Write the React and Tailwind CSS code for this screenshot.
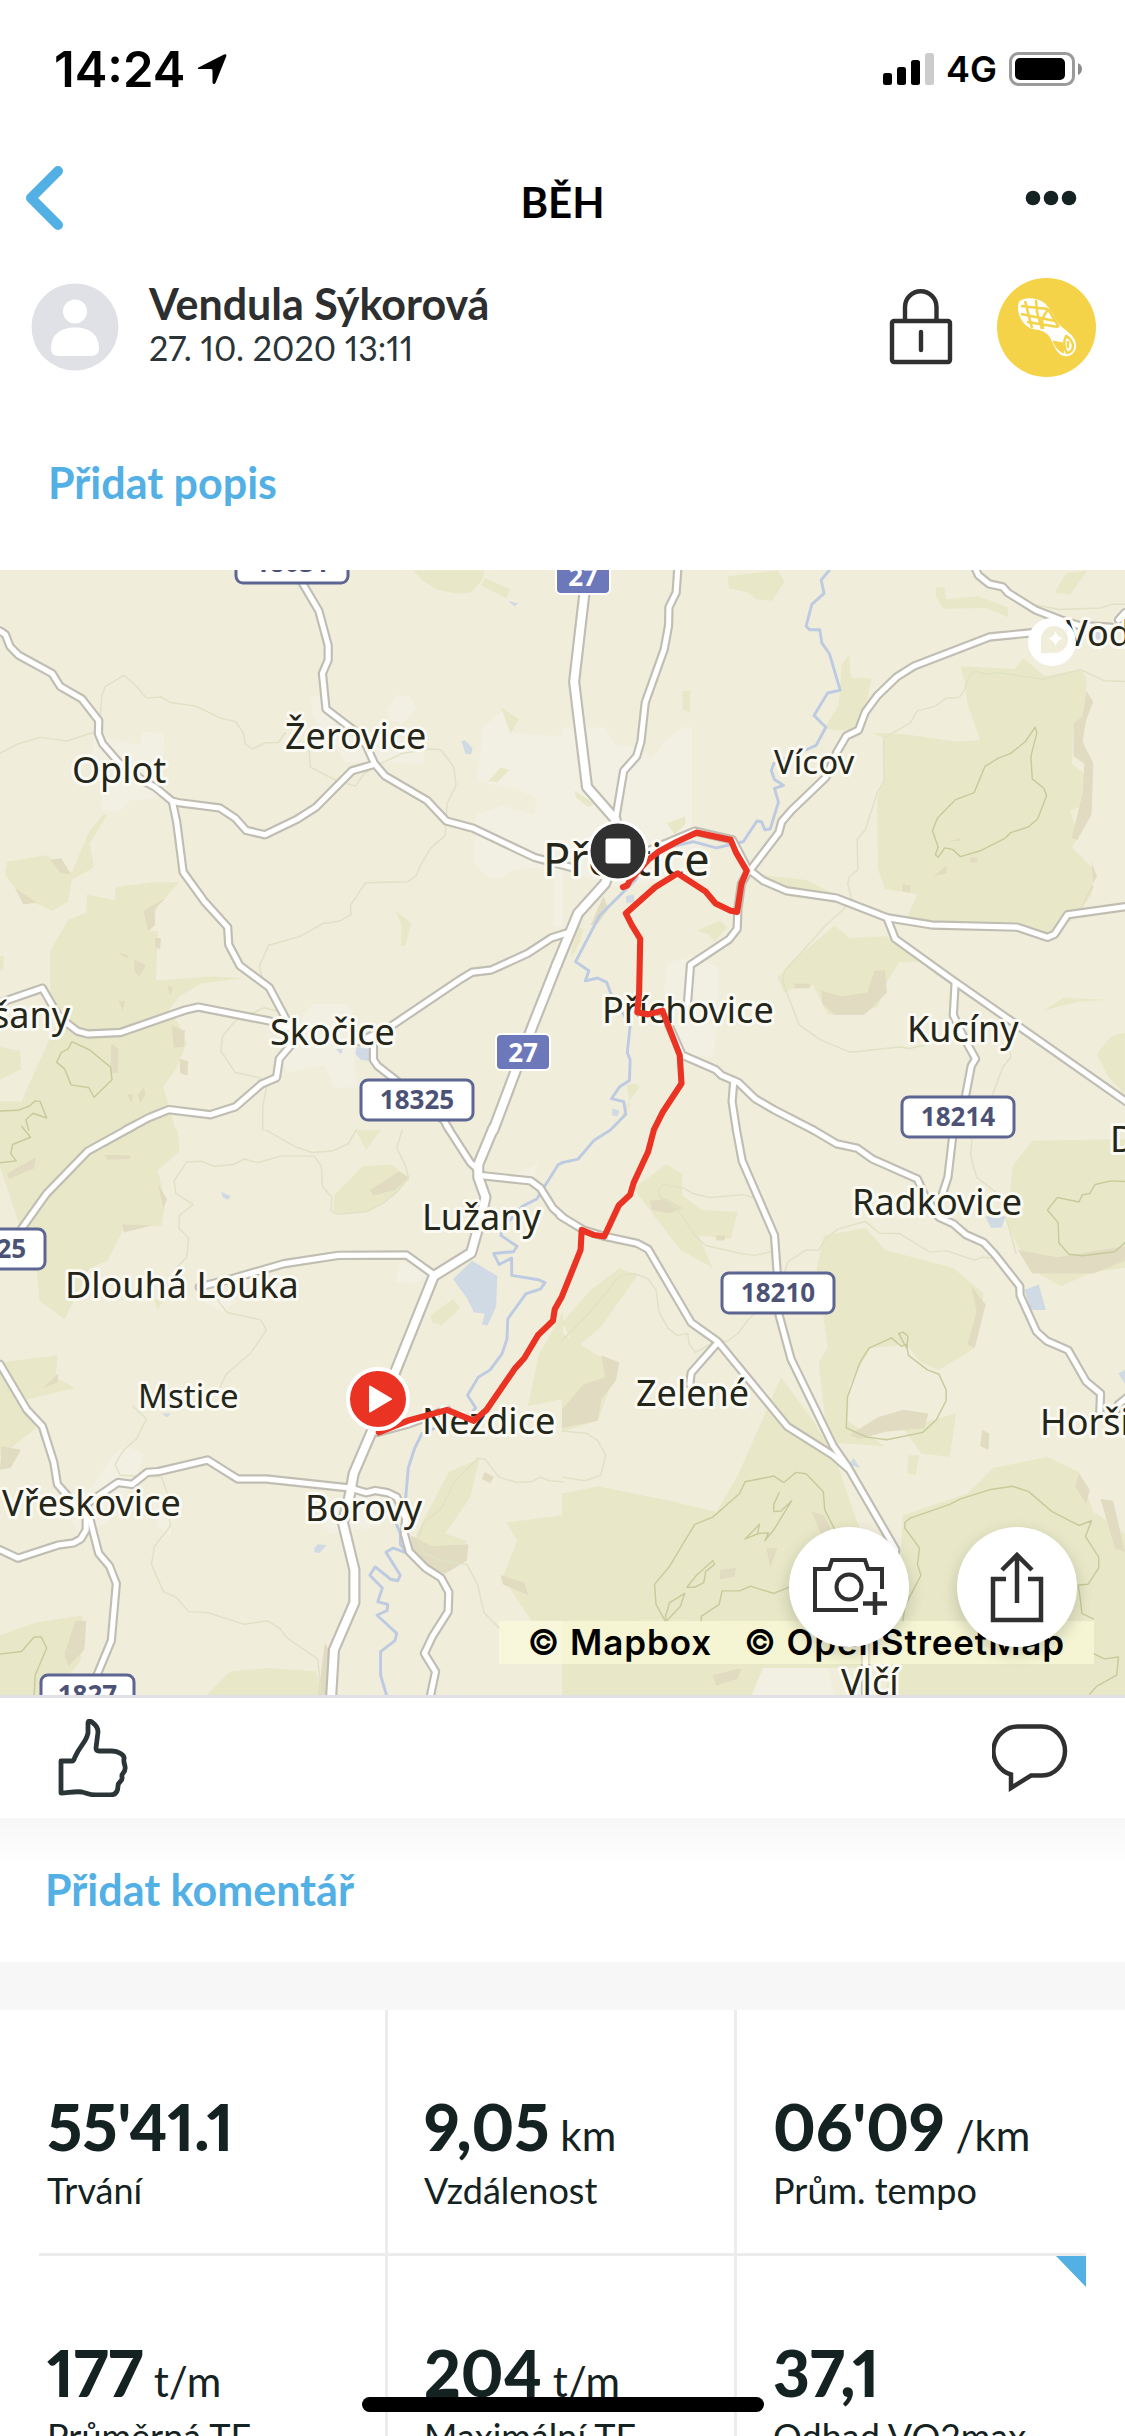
import React from 'react';

// Map geometry is split in four tiles, each with its own origin
const TILES = [
    {
        id: 'nw',
        x: 0,
        y: 0,
        built: [
            '398,472 458,478 452,600 470,650 360,662 330,692 282,685 285,640 256,540 262,480 390,510',
            '866,372 905,380 985,470 1180,500 1180,560 960,556 940,520 900,500 870,420',
            '1078,410 1105,372 1140,375 1160,410 1120,450 1085,440',
            '1345,460 1400,415 1430,476 1568,485 1568,845 1430,850 1400,875 1355,870 1318,830 1325,700 1400,676 1490,700 1492,655 1440,630 1328,610',
            '870,1222 970,1222 1000,1300 985,1400 1000,1450 930,1452 905,1390 800,1410 780,1370 820,1290',
            '1545,850 1568,850 1568,1010 1540,1005',
        ],
        forest: [
            '1150,28 1350,28 1340,60 1310,90 1270,92 1220,82 1180,60',
            '1350,50 1420,80 1410,105 1340,70',
            '20,830 130,812 200,860 225,800 250,745 290,698 298,702 250,780 262,845 200,880 190,940 145,965 90,940 45,905 14,865',
            '322,900 430,886 500,886 440,950 420,1020 440,1020 434,1156 590,1146 680,1150 560,1165 500,1200 470,1240 500,1280 520,1330 490,1400 455,1450 470,1500 490,1570 0,1570 0,1490 60,1490 100,1400 170,1250 140,1200 140,1075 190,990 240,970 242,920 320,936',
            '1395,405 1445,438 1422,478',
            '1360,608 1395,570 1418,578 1385,612',
            '1102,965 1146,1000 1128,1064 1116,1060 1118,1005',
            '0,1340 55,1350 60,1400 0,1430',
            '0,1090 10,1090 10,1125 0,1130',
        ],
        slope: [
            '140,825 170,820 198,866 168,860',
            '42,902 102,942 65,948',
            '400,965 465,928 430,960 432,1005 412,1020',
            '374,1098 406,1115 388,1145 374,1132',
            '432,1040 448,1040 446,1070 432,1065',
            '330,1080 355,1088 355,1098',
            '478,1280 515,1295 512,1340 484,1342',
            '310,1330 330,1345 328,1412 308,1410',
            '400,1452 406,1470 390,1495 384,1470',
            '330,1212 348,1214 342,1240',
            '355,1470 370,1470 365,1495',
            '466,1172 482,1174 474,1198',
            '500,1372 524,1378 522,1418 502,1412',
        ],
        water: ['1285,498 1295,496 1316,518 1312,535 1296,532', '1415,113 1445,120 1432,127', '992,1340 1028,1345 1028,1378 1005,1375 990,1360', '935,1345 955,1345 950,1360'],
        borders: [
            '0,532 50,506 112,488 186,498 262,474 278,440 284,372 293,348 346,317 380,348 408,380 450,377 475,392 545,402 615,435 657,445 680,480 682,505 702,520 740,503 775,502 795,475',
            '860,500 864,570 940,608 990,622 1012,590 1060,560 1120,532 1200,520 1228,522 1264,570 1270,620 1245,670 1240,758 1200,792 1170,842 1160,868 1136,885 1018,888 976,950 978,975 944,994 900,1000 834,1036 748,1060 722,1118 735,1165',
            '770,1240 735,1232 655,1268 620,1310 615,1350 655,1410 725,1425 742,1455 732,1500 732,1568',
        ],
        contours: [
            '200,1325 250,1348 308,1395 312,1430 262,1478 248,1452 198,1444 180,1400 158,1382 170,1355 190,1345 200,1325',
            '0,1516 50,1514 82,1502 98,1488 112,1490 130,1535 92,1522 72,1540 80,1568',
        ],
        roads: [
            '840,60 888,140 914,235 914,275 898,312 908,410 990,472 1020,510 1043,560 1072,594 1190,662 1243,718 1318,738 1488,818 1600,848',
            '0,195 15,205 28,238 52,262 145,312 168,348 228,382 275,442 274,478 286,506 330,556 400,608 432,625 480,664 500,668 612,682 655,710 686,744 738,756 826,714 880,680 980,580 1043,562',
            '480,664 492,720 510,858 570,940 634,1010 637,1058 668,1116 750,1176 795,1260 812,1290 810,1335 778,1372 770,1424 728,1442 656,1504 586,1526 470,1512 415,1534 350,1568',
            '0,1218 118,1178 165,1258 215,1296 245,1304 335,1300 516,1238 552,1230 750,1268 812,1290',
            '1000,1325 1085,1285 1280,1155 1315,1134 1368,1128 1470,1082 1535,1040 1585,1024',
            '1040,1310 1040,1375 1052,1392 1095,1425 1235,1540 1252,1568',
        ],
        highways: ['1552,1110 1480,1290 1374,1568'],
        rivers: [],
        route: '',
    },
    {
        id: 'ne',
        x: 1565,
        y: 0,
        built: [
            '0,460 120,460 150,510 210,515 250,545 285,500 340,458 362,460 362,730 420,860 300,880 150,900 0,850',
            '292,1110 360,1090 435,1120 440,1250 420,1370 340,1360 290,1260 285,1180',
        ],
        forest: [
            '462,45 600,28 620,60 585,112 540,108 520,90 465,78',
            '1042,75 1065,75 1070,108 1160,100 1240,130 1245,158 1180,132 1062,134 1042,100',
            '778,290 800,260 805,325 862,325 842,430 800,470 730,465 770,400 775,358',
            '335,362 358,358 356,418 336,412',
            '865,475 960,480 1100,500 1165,495 1130,400 1120,330 1110,292 1260,300 1285,270 1345,320 1445,300 1462,330 1450,430 1425,450 1420,560 1458,590 1440,680 1415,690 1440,760 1420,790 1480,850 1475,920 1430,985 1350,1040 1270,1010 1030,1004 960,985 990,920 900,905 880,850 878,650 898,610 895,490',
            '620,1190 600,1150 670,1080 760,1005 800,1040 900,1035 930,1045 1000,1105 940,1105 900,1170 880,1230 800,1250 740,1250 700,1170 640,1180',
            '292,725 343,705 345,725 315,755',
            '376,1020 440,992 460,1010 425,1050 410,1030',
            '25,1080 45,1010 60,1015 50,1050 28,1092',
            '35,635 90,670 75,680 40,655',
            '1345,1238 1395,1205 1520,1210 1440,1215',
            '1568,1300 1530,1310 1490,1360 1520,1420 1568,1470',
            '1372,90 1405,35 1465,28 1415,95',
            '545,865 680,880 750,915 620,905 570,880',
            '180,1445 205,1440 215,1450 180,1500 150,1560 190,1500',
        ],
        slope: [
            '1460,360 1480,390 1460,440 1450,500 1480,560 1475,700 1435,770 1420,765 1450,640 1455,560 1425,540 1425,450 1450,430',
            '1475,830 1490,870 1430,985 1480,900',
            '722,1185 780,1200 850,1190 870,1130 900,1128 905,1190 860,1235 840,1252 760,1252 725,1220',
            '645,1165 692,1166 690,1178 650,1178',
            '1035,870 1070,842 1072,862',
            '1078,775 1108,765 1108,772',
            '948,892 970,895 970,915 948,910',
            '1140,818 1158,820 1155,832 1135,832',
            '80,1005 115,925 130,960 100,1000',
        ],
        water: ['1480,190 1502,188 1505,220 1488,218', '178,925 200,920 202,940 180,945', '140,1508 160,1515 155,1530 140,1528'],
        borders: [
            '1568,122 1530,122 1500,132 1385,136 1300,120 1240,90',
            '1568,334 1510,332 1445,302 1340,328 1215,310 1185,314 1152,306 1135,318 1120,360 1105,378 1070,380 1040,402 990,415 970,448 896,490 897,610 878,640 845,742 822,768 824,852 800,872 796,890 806,930 785,960 735,1005 620,1130 615,1160 660,1278 720,1320 802,1354 940,1340 968,1344 1010,1335',
            '1245,1330 1250,1368 1228,1395 1198,1475',
        ],
        contours: ['1318,460 1290,500 1250,532 1215,545 1178,568 1148,640 1095,660 1046,710 1032,745 1048,790 1040,810 1048,818 1066,792 1088,796 1110,816 1165,800 1235,765 1250,750 1300,734 1325,712 1350,648 1342,628 1310,602 1306,540 1323,475 1318,460'],
        roads: [
            '323,20 318,90 298,130 297,180 285,245 232,392 220,500 208,540 172,580 150,710',
            '1150,20 1160,42 1190,66 1228,74 1242,90 1320,138 1390,165 1440,180 1530,185',
            '1568,145 1550,165',
            '1310,200 1190,212 980,292 932,322 878,374 845,418 826,468 792,484 765,530 735,598 640,688 612,720 604,750 525,852',
            '525,855 560,882 625,910 765,930 905,984 1030,1004 1268,1010 1352,1038 1372,1030 1408,976 1568,954',
            '905,984 928,1042 1080,1150 1300,1302 1600,1510',
            '1095,1165 1090,1252 1120,1315 1152,1372 1140,1392 1124,1475',
            '240,800 370,746 475,770 520,855 500,890 490,960 488,1015 465,1044 358,1114 348,1240',
            '215,1244 280,1240 335,1362 428,1402 445,1418 492,1438 538,1482 590,1512 700,1568',
            '478,1440 474,1490 486,1568',
        ],
        highways: ['64,80 34,335 70,625 150,715 155,800 120,890 45,972 -15,1115'],
        rivers: [
            '745,28 722,55 730,92 696,122 680,182 690,192 718,192 724,228 745,258 775,358 740,366 702,428 735,460 708,510 685,520 590,560 583,580 592,604 617,620 592,628 603,666 580,740 565,742 556,720 543,718 505,775 430,792 365,775 250,800 205,880 105,978 38,1105 75,1130 65,1158 100,1150 125,1162 135,1190 190,1280 182,1355 190,1375 188,1432 160,1450 138,1482 172,1490 178,1525 135,1568 90,1596 45,1648 0,1658',
        ],
        route: '170,900 182,895 190,880 240,825 270,802 320,775 375,750 470,770 485,805 515,855 500,890 488,968 470,965 428,945 400,912 322,862 260,900 178,972 195,1005 218,1042 215,1190 210,1244 240,1250 280,1240 328,1362 333,1440 280,1520 256,1568 240,1628 200,1713 190,1746 158,1776 118,1861 90,1857 55,1843 52,1898 0,2026 -20,2061 -25,2093 -67,2133 -105,2196 -130,2223 -210,2338 -245,2368 -320,2338 -430,2368 -510,2400',
    },
    {
        id: 'sw',
        x: 0,
        y: 1568,
        built: [
            '560,400 610,440 660,470 620,500 560,470',
            '1115,360 1200,395 1160,420 1100,418',
            '310,900 350,868 400,890 380,960 300,1080 220,1110 180,1040 250,990',
            '420,1010 480,1000 475,1120 440,1090',
            '870,1060 960,1000 1100,1010 1060,1090 920,1110',
            '1440,120 1500,90 1480,150',
        ],
        forest: [
            '0,0 495,0 500,60 440,110 460,200 450,265 350,260 300,360 250,380 200,480 180,520 110,470 100,360 130,300 60,280 0,100',
            '930,180 1010,100 1090,95 1138,130 1100,180 1020,225 930,230',
            '990,0 1060,0 1020,55',
            '0,640 160,620 155,680 210,710 60,745 100,820 0,900',
            '0,1390 100,1355 230,1335 225,1460 140,1560 0,1560',
            '570,1560 640,1490 750,1480 880,1490 900,1560',
            '1160,1110 1250,940 1335,905 1310,1010 1240,1110 1300,1130 1240,1220 1150,1170',
            '1410,1080 1568,1060 1568,1350 1480,1350 1400,1230 1440,1130',
            '1500,620 1568,500 1568,740 1470,760',
            '1198,510 1262,465 1282,490 1230,538 1205,530',
            '430,470 470,440 440,495',
        ],
        slope: [
            '20,120 100,75 95,105 25,135',
            '1030,165 1110,115 1138,130 1100,165 1040,180',
            '1145,1115 1200,1145 1305,1140 1300,1185 1240,1220 1190,1200 1150,1160',
            '1395,1225 1460,1245 1472,1280 1400,1250',
            '1350,940 1375,955 1365,972 1342,960',
            '440,150 465,190 455,215',
            '290,68 365,70 360,80 300,82',
            '340,260 425,262 345,282',
            '120,710 162,670 160,695',
            '5,870 58,880 30,930 0,935',
            '210,1350 240,1350 235,1430 190,1475 180,1440',
            '905,1410 925,1450 905,1560 885,1560',
        ],
        water: ['1262,410 1315,360 1385,402 1382,485 1358,538 1342,535 1350,505 1320,502 1302,465', '875,1150 885,1140 910,1142 890,1164 876,1162', '616,170 642,182 635,192 620,185', '450,780 476,780 465,790'],
        borders: [
            '740,0 820,45 870,62 925,58 970,38 992,0',
            '490,380 520,350 525,298 498,270 500,235 538,205 490,175 485,140 520,88 560,86 598,100 650,95 680,80 718,90 780,72 875,72 895,100 898,155 924,185 922,222 940,232 1020,225 1070,200 1110,165 1138,132 1130,100 1105,50 1120,0',
            '600,460 632,502 725,522 742,550 700,612 630,672 612,710',
            '370,760 408,795 380,850 345,880 320,920 335,950 450,955 466,1000 474,1090 430,1145 422,1195 455,1270 490,1285 525,1325 580,1328 680,1360 745,1350 780,1372 800,1398 885,1455 895,1560',
            '1568,968 1530,965 1505,955 1480,968 1440,970 1390,955 1350,905 1330,903 1265,970 1230,1040 1180,1080 1165,1120 1180,1165 1230,1185 1300,1195 1330,1250 1348,1328 1400,1380',
        ],
        contours: ['60,-10 85,20 35,40 30,65 45,85 0,90', '0,1442 60,1435 95,1395 115,1395 130,1425 98,1500 95,1560'],
        roads: [
            '370,-10 245,58 130,175 60,272',
            '1245,-10 1310,90 1332,110',
            '1335,125 1478,140 1505,160 1540,215 1568,240',
            '555,432 650,408 790,368 942,345 1132,344 1208,398',
            '0,645 75,770 118,815 150,915 160,975 200,1020 240,1050 240,1100 225,1125 205,1136 162,1142 50,1178 0,1155',
            '240,1030 328,970 368,975 410,942 440,940 578,908 662,960 742,960 975,985 1020,998 1045,992 1080,998 1105,1010 1130,1070 1126,1110 1140,1160 1185,1205 1228,1232 1250,1272 1248,1325 1205,1392 1182,1440 1213,1490 1196,1570',
            '245,1050 275,1165 305,1200 324,1248 310,1405 270,1500 255,1570',
            '1050,832 1140,808 1245,770',
        ],
        highways: ['1374,-5 1332,95 1332,130 1352,185 1340,240 1312,338 1208,402 1105,655 1035,830 985,945 975,1000 955,1080 987,1210 987,1300 930,1430 921,1580'],
        rivers: [
            '1568,90 1555,95 1520,150 1495,190 1455,210 1400,270 1395,290 1440,320 1430,335 1375,340 1390,370 1425,352 1425,400 1500,412 1518,420 1505,438 1465,450 1414,520 1412,575 1398,616 1365,660 1332,680 1302,730 1325,765 1310,780 1175,835 1155,875 1137,930 1130,1010 1102,1080 1115,1110 1115,1140 1135,1165 1095,1150 1075,1162 1115,1225 1108,1240 1088,1236 1045,1202 1030,1225 1065,1260 1052,1298 1080,1305 1078,1322 1050,1335 1105,1385 1100,1405 1060,1435 1060,1500 1078,1560',
        ],
        route: '',
    },
    {
        id: 'se',
        x: 1565,
        y: 1568,
        built: ['1510,830 1568,740 1568,850', '980,1200 1050,1250 1010,1330 950,1350', '530,1560 560,1480 740,1480 760,1560', '1030,1530 1060,1480 1100,1500 1090,1555'],
        forest: [
            '200,160 290,95 335,120 335,180 390,220 490,225 470,300 380,290 420,380 330,330 260,240',
            '730,290 845,270 900,330 1090,380 1175,450 1150,600 1050,660 1000,640 960,590 860,600 800,700 795,800 900,870 740,860 715,640 740,600 710,380',
            '1255,100 1310,30 1568,25 1568,380 1480,390 1390,430 1300,380 1240,260',
            '610,680 700,800 760,900 830,1100 870,1340 0,1350 0,1000 100,980 300,1020 430,1050 490,950',
            '950,1060 1130,1000 1200,930 1350,900 1440,940 1480,1050 1568,1110 1568,1350 930,1350',
            '0,530 80,440 160,380 210,400 110,540 40,600',
            '0,560 100,620 160,640 100,800 0,830',
            '0,1350 870,1340 860,1480 560,1480 520,1570 0,1570',
            '930,1350 1568,1350 1568,1570 900,1570',
            '950,820 1098,780 1080,900 1000,890',
            '965,895 995,895 985,950 962,945',
        ],
        slope: [
            '245,195 290,190 335,215 300,230 250,220',
            '110,620 160,640 150,690 110,740 100,800 0,820 0,770 60,700 120,680',
            '1270,330 1380,350 1568,320 1568,360 1480,395 1310,395',
            '1140,430 1180,480 1150,600 1130,590 1155,500',
            '880,790 950,770 1020,780 1010,820 900,830 830,850 800,840',
            '1170,825 1190,835 1188,880 1165,870',
            '1440,945 1470,990 1460,1030 1430,980',
            '1500,1015 1535,1020 1568,1160 1540,1150',
            '695,1050 730,1060 760,1120 730,1130',
            '440,1210 485,1205 480,1230 440,1235',
            '420,1500 500,1480 490,1510 430,1528',
            '430,290 455,290 452,304 430,304',
            '570,1150 600,1150 580,1205',
        ],
        water: ['1180,240 1205,218 1235,240 1225,268 1195,270', '1288,440 1328,425 1348,495 1305,495', '800,920 812,902 830,930', '1550,670 1568,660 1568,698'],
        borders: [
            '530,185 505,178 410,186 365,175 340,160 285,150 268,165 272,182 320,215 370,290 400,318 500,340 540,345 580,335',
            '1230,355 1170,350 1150,358 1070,332 1025,336 940,285 885,284 845,252 770,272 735,298 715,330 680,330 630,362 600,450 520,520 490,560 460,582 430,580 372,612 355,590 350,560 322,565 295,545 270,500 262,440 240,410 205,395 160,402 80,500 0,580',
            '1142,25 1138,70 1155,130 1220,180 1265,340',
            '0,828 70,835 100,855 122,895 108,950 65,965 0,955',
        ],
        contours: [
            '918,572 855,600 830,640 795,735 792,820 850,845 905,852 1005,832 1042,798 1070,745 1070,715 1050,672 1018,660 965,620 960,590 945,595 918,572',
            '938,560 950,556 964,568 960,600 938,560',
            '1568,142 1530,140 1485,150 1470,175 1450,178 1440,198 1380,186 1352,220 1382,255 1384,310 1412,342 1450,346 1540,335 1568,310',
            '288,1352 262,1305 258,1250 300,1200 370,1085 420,1065 495,1000 510,968 590,952 618,970 652,942 680,946 728,995 732,1045 760,1100',
            '388,1352 388,1338 438,1305 446,1268 495,1268 525,1255 590,1275 640,1255',
            '950,1350 955,1310 1000,1225 990,1195 996,1150 955,1095 955,1080 970,1068 1080,1030 1110,1015 1190,990 1255,980 1300,995 1365,1050 1440,1088 1475,1075 1458,1118 1495,1175 1495,1205 1465,1250 1438,1252 1445,1300 1448,1330 1480,1345',
            '1480,1440 1510,1455 1550,1450 1545,1500 1490,1530 1470,1552',
            '605,998 590,1030 590,1050 610,1048 640,1020 590,1100 565,1130 575,1108 548,1110 510,1125 550,1085 545,1110',
            '420,1185 425,1195 400,1215 395,1245 370,1258 348,1258 375,1225 420,1185',
            '342,1275 330,1310 292,1350 288,1340 300,1300 342,1275',
        ],
        roads: [
            '486,0 502,85 592,290 600,400 605,510 638,630 755,868 795,925 930,1155 900,1300 845,1400 846,1560',
            '700,0 765,38 822,50 865,80 990,135 1010,180 1050,240 1090,258 1125,288 1175,310 1205,342 1275,430 1276,455 1322,555 1350,580 1410,606 1460,692 1500,725 1498,780',
            '1540,780 1550,755 1575,735',
            '1088,20 1075,130 1055,190',
            '-5,236 60,275 115,292 210,312 240,328 360,530 434,582 628,816 755,895 795,930',
            '434,585 360,668 356,700',
        ],
        highways: [],
        rivers: [],
        route: '',
    },
];

const PLACES = [
    { name: 'Žerovice', x: 285, y: 179, size: 36 },
    { name: 'Oplot', x: 72, y: 213, size: 36 },
    { name: 'šany', x: -8, y: 458, size: 36 },
    { name: 'Skočice', x: 270, y: 475, size: 36 },
    { name: 'Vícov', x: 774, y: 204, size: 33 },
    { name: 'Přeštice', x: 543, y: 306, size: 45 },
    { name: 'Příchovice', x: 602, y: 453, size: 36 },
    { name: 'Kucíny', x: 907, y: 472, size: 36 },
    { name: 'Radkovice', x: 852, y: 645, size: 36 },
    { name: 'Zelené', x: 636, y: 836, size: 36 },
    { name: 'Horši', x: 1040, y: 865, size: 36 },
    { name: 'Vlčí', x: 841, y: 1125, size: 36 },
    { name: 'D', x: 1110, y: 582, size: 36 },
    { name: 'Vod', x: 1066, y: 76, size: 36 },
    { name: 'Lužany', x: 422, y: 660, size: 36 },
    { name: 'Dlouhá Louka', x: 65, y: 728, size: 36 },
    { name: 'Mstice', x: 138, y: 838, size: 33 },
    { name: 'Vřeskovice', x: 2, y: 946, size: 36 },
    { name: 'Borovy', x: 305, y: 951, size: 36 },
    { name: 'Nezdice', x: 422, y: 864, size: 36 },
];

const SHIELDS = [
    { label: '18031', x: 236, y: -27, w: 112 },
    { label: '18325', x: 361, y: 510, w: 112 },
    { label: '18214', x: 902, y: 527, w: 112 },
    { label: '18210', x: 722, y: 703, w: 112 },
    { label: '18325', x: -67, y: 659, w: 112 },
    { label: '1827', x: 41, y: 1105, w: 93 },
];

const STATS = [
    { value: "55'41.1", unit: '', label: 'Trvání' },
    { value: '9,05', unit: 'km', label: 'Vzdálenost' },
    { value: "06'09", unit: '/km', label: 'Prům. tempo' },
    { value: '177', unit: 't/m', label: 'Průměrná TF' },
    { value: '204', unit: 't/m', label: 'Maximální TF' },
    { value: '37,1', unit: '', label: 'Odhad VO2max', flagged: true },
];

const Areas = ({ layer, fill }) => (
    <g fill={fill}>
        {TILES.map((tile) => (
            <g key={tile.id} transform={`translate(${tile.x} ${tile.y})`}>
                {tile[layer].map((points) => <polygon key={points} points={points} />)}
            </g>
        ))}
    </g>
);

const Lines = ({ layer, stroke, width }) => (
    <g fill="none" stroke={stroke} strokeWidth={width} strokeLinejoin="round" strokeLinecap="round">
        {TILES.map((tile) => (
            <g key={tile.id} transform={`translate(${tile.x} ${tile.y})`}>
                {tile[layer].map((points) => <polyline key={points} points={points} />)}
            </g>
        ))}
    </g>
);

const RouteMap = () => (
    <svg viewBox="0 0 1125 1125" className="block w-full bg-[#f0eddb]" role="img" aria-label="Mapa trasy">
        <g transform="translate(0 -10) scale(0.35906 0.3635)">
            <Areas layer="built" fill="#f2f0e2" />
            <Areas layer="forest" fill="#e8e8c8" />
            <Areas layer="slope" fill="#e0dbc1" />
            <Areas layer="water" fill="#cfdae5" />
            <Lines layer="borders" stroke="#dfe2c5" width={4} />
            <Lines layer="contours" stroke="#c6cb9b" width={4} />
            <Lines layer="rivers" stroke="#bccae2" width={8} />
            <Lines layer="roads" stroke="#c0bdb3" width={26} />
            <Lines layer="highways" stroke="#c0bdb3" width={34} />
            <Lines layer="roads" stroke="#ffffff" width={14} />
            <Lines layer="highways" stroke="#ffffff" width={22} />
        </g>

        {PLACES.map((place) => (
            <text
                key={place.name}
                x={place.x}
                y={place.y}
                fontSize={place.size}
                fill="#25261a"
                stroke="#fbfaf2"
                strokeWidth="6"
                strokeLinejoin="round"
                paintOrder="stroke"
                className="font-['Noto_Sans',sans-serif]"
            >
                {place.name}
            </text>
        ))}

        {SHIELDS.map((shield) => (
            <g key={`${shield.x}-${shield.y}`}>
                <rect x={shield.x} y={shield.y} width={shield.w} height="40" rx="7" fill="#ffffff" stroke="#5d6592" strokeWidth="3" />
                <text x={shield.x + shield.w / 2} y={shield.y + 29} fontSize="26" textAnchor="middle" fill="#4c5275" className="font-['Noto_Sans',sans-serif] font-bold">
                    {shield.label}
                </text>
            </g>
        ))}
        {[{ x: 556, y: -12 }, { x: 496, y: 464 }].map((pos) => (
            <g key={pos.y}>
                <rect x={pos.x} y={pos.y} width="54" height="36" rx="5" fill="#6d78bb" stroke="#ffffff" strokeWidth="2" />
                <text x={pos.x + 27} y={pos.y + 28} fontSize="26" textAnchor="middle" fill="#ffffff" className="font-['Noto_Sans',sans-serif] font-bold">
                    27
                </text>
            </g>
        ))}

        <g transform="translate(0 -10) scale(0.35906 0.3635)">
            {TILES.filter((tile) => tile.route).map((tile) => (
                <polyline
                    key={tile.id}
                    points={tile.route}
                    transform={`translate(${tile.x} ${tile.y})`}
                    fill="none"
                    stroke="#ea3323"
                    strokeWidth="17"
                    strokeLinejoin="round"
                    strokeLinecap="round"
                />
            ))}
        </g>

        {/* start and finish markers */}
        <circle cx="378" cy="829" r="30" fill="#ea3323" stroke="#ffffff" strokeWidth="4" />
        <path d="M370 816.500L391 829L370 841.500Z" fill="#ffffff" stroke="#ffffff" strokeWidth="2" strokeLinejoin="round" />
        <circle cx="618" cy="281" r="29" fill="#303030" stroke="#ffffff" strokeWidth="3" />
        <rect x="605.500" y="268.500" width="25" height="25" rx="2" fill="#ffffff" />

        <circle cx="1052" cy="72" r="24" fill="#ffffff" />
        <path d="M1041 83V70A13.500 13.500 0 1 1 1054 83Z" fill="#f0eddb" />
        <path d="M1055.500 61Q1057 67 1063 68.500Q1057 70 1055.500 76Q1054 70 1048 68.500Q1054 67 1055.500 61Z" fill="#ffffff" />
    </svg>
);

const StatusBar = () => (
    <div className="flex h-[138px] shrink-0 items-center justify-between pl-[54px] pr-[42px] font-['Inter',sans-serif] font-semibold text-black">
        <div className="flex items-center gap-3">
            <span className="text-[49px] leading-none">14:24</span>
            <svg width="30" height="32" viewBox="0 0 30 32">
                <path d="M1.500 14.500L27 1.500Q30 .5 29.200 3.500L18.500 30Q16.500 32.500 15.500 29.500V17.500Q15.400 16 14 16H3Q-.5 16 1.500 14.500Z" />
            </svg>
        </div>
        <div className="flex items-center gap-3">
            <svg width="51" height="32" viewBox="0 0 51 32">
                <rect y="20" width="9" height="12" rx="2.500" />
                <rect x="14" y="14" width="9" height="18" rx="2.500" />
                <rect x="28" y="7" width="9" height="25" rx="2.500" />
                <rect x="42" width="9" height="32" rx="2.500" fill="#cccccc" />
            </svg>
            <span className="text-[36px] leading-none">4G</span>
            <svg width="74" height="34" viewBox="0 0 74 34">
                <rect x="1.500" y="1.500" width="63" height="31" rx="8" fill="none" stroke="#9b9b9b" strokeWidth="3" />
                <rect x="6" y="6" width="50" height="22" rx="5" />
                <path d="M69 11Q73 13 73 17Q73 21 69 23Z" fill="#8c8c8c" />
            </svg>
        </div>
    </div>
);

const NavBar = () => (
    <header className="grid h-[120px] shrink-0 grid-cols-3 items-center px-12">
        <button aria-label="Zpět" className="-ml-6 justify-self-start">
            <svg width="40" height="66" viewBox="0 0 40 66" fill="none" stroke="#53b0e5" strokeWidth="10" strokeLinecap="round" strokeLinejoin="round">
                <path d="M34 6L7 33L34 60" />
            </svg>
        </button>
        <h1 className="justify-self-center pt-2 text-[42px] font-bold leading-none text-black">BĚH</h1>
        <button aria-label="Další možnosti" className="justify-self-end">
            <svg width="52" height="16" viewBox="0 0 52 16" fill="#142222">
                <circle cx="8" cy="8" r="7.300" />
                <circle cx="26" cy="8" r="7.300" />
                <circle cx="44" cy="8" r="7.300" />
            </svg>
        </button>
    </header>
);

const Author = () => (
    <div className="flex h-[138px] items-center pl-[31px] pr-[29px]">
        <svg width="88" height="88" viewBox="0 0 88 88" className="shrink-0">
            <circle cx="44" cy="44" r="43.500" fill="#e0e1e7" />
            <circle cx="44" cy="28.500" r="12" fill="#ffffff" />
            <path d="M20 66C20 51 30 44.500 44 44.500S68 51 68 66Q68 73 60 73H28Q20 73 20 66Z" fill="#ffffff" />
        </svg>
        <div className="ml-[30px] grow pb-1">
            <p className="text-[43px] font-bold leading-[46px] text-[#2d2e2f]">Vendula Sýkorová</p>
            <p className="text-[34px] leading-[42px] text-[#2b3538] proportional-nums">27. 10. 2020 13:11</p>
        </div>
        <svg width="64" height="76" viewBox="0 0 64 76" fill="none" stroke="#303030" strokeWidth="4.400" strokeLinecap="round" strokeLinejoin="round" className="mr-11 shrink-0">
            <rect x="3" y="32" width="58" height="41" rx="2" />
            <path d="M16 31V18A15.500 15.500 0 0 1 47.500 18V31" />
            <path d="M32 43V61" />
        </svg>
        <svg width="99" height="99" viewBox="0 0 99 99" className="shrink-0">
            <circle cx="49.500" cy="49.500" r="49.500" fill="#f5d349" />
            <path d="M22 24C26 19 38 19 46 24C53 29 56 38 62 46C67 52 78 57 79 66C80 74 74 79 67 78C59 76 57 66 52 58C48 53 42 52 36 51C26 49 18 34 22 24Z" fill="#ffffff" />
            <g fill="none" stroke="#f5d349" strokeWidth="2.500">
                <path d="M24 28L51 31M24 36L58 43M30 44L61 49M28 23L35 50M39 22L40 34L45 51M51 31L45 41L46 51M51 31L62 49" />
                <path d="M56 63L66 65L67 75Q60 73 56 63Z" fill="#f5d349" strokeWidth="1" />
                <path d="M69 58Q65 66 70 75Q76 74 76 67Q74 60 69 58Z" />
                <path d="M71 63V70" />
            </g>
        </svg>
    </div>
);

const MapSection = () => (
    <section className="relative overflow-hidden">
        <RouteMap />
        <div className="absolute bottom-[31px] right-[31px] flex h-[43px] items-center gap-8 bg-[#ffffdc]/55 px-[29px] font-['Inter',sans-serif] text-[35px] font-semibold leading-none tracking-wide text-black">
            <a href="#mapbox">© Mapbox</a>
            <a href="#osm">© OpenStreetMap</a>
        </div>
        <div className="absolute bottom-12 right-12 flex gap-12">
            <button aria-label="Přidat fotku" className="flex size-[120px] items-center justify-center rounded-full bg-white shadow-[0_6px_16px_rgba(0,0,0,0.18)]">
                <svg width="76" height="62" viewBox="0 0 76 62" fill="none" stroke="#303030" strokeWidth="4">
                    <path d="M47 54H4V13H18L21 4H54L57 13H71V33" />
                    <circle cx="38" cy="31" r="12.500" />
                    <path d="M64 36V59M52 47.500H76" strokeWidth="4.500" />
                </svg>
            </button>
            <button aria-label="Sdílet" className="flex size-[120px] items-center justify-center rounded-full bg-white shadow-[0_6px_16px_rgba(0,0,0,0.18)]">
                <svg width="54" height="72" viewBox="0 0 54 72" fill="none" stroke="#303030" strokeWidth="4.500">
                    <path d="M16 28H3V69H51V28H38" />
                    <path d="M27 52V4M12 19L27 4L42 19" />
                </svg>
            </button>
        </div>
    </section>
);

const StatCell = ({ stat, first, last }) => (
    <div className={`relative h-[246px] border-b-3 border-[#ececec] pt-[84px] text-[#142222] proportional-nums ${first ? 'pl-2' : 'pl-9'} ${last ? '' : 'border-r-3'}`}>
        <p className="whitespace-nowrap text-[42px] leading-[66px]">
            <span className="text-[64px] font-black">{stat.value}</span> {stat.unit}
        </p>
        <p className="whitespace-nowrap text-[36px] leading-[44px]">{stat.label}</p>
        {stat.flagged && (
            <svg width="30" height="31" viewBox="0 0 30 31" className="absolute right-0 top-0">
                <path d="M0 0H30V31Z" fill="#53b0e5" />
            </svg>
        )}
    </div>
);

export default function App() {
    return (
        <div className="flex h-screen flex-col overflow-hidden bg-white font-['Lato',sans-serif]">
            <StatusBar />
            <NavBar />
            <main className="min-h-0 grow overflow-y-auto [scrollbar-width:none]">
                <Author />
                <div className="flex h-[174px] items-center pl-12">
                    <button className="text-[43px] font-bold leading-[48px] text-[#53b0e5]">Přidat popis</button>
                </div>

                <MapSection />

                <div className="flex h-[123px] items-center justify-between border-t-3 border-[#e0e0e6] pl-[58px] pr-[57px]">
                    <button aria-label="To se mi líbí">
                        <svg width="70" height="78" viewBox="0 0 70 78" fill="none" stroke="#2b3538" strokeWidth="4.800" strokeLinejoin="round">
                            <path d="M3 42H14C16 42 16 40 17 38C22 26 28 24 30 14V4C30 1 33 2 35 4C39 7 40 9 40 13L38 29Q38 32 41 32H54C60 32 67 36 66 40C65 44 68 47 67 50C67 54 63 54 64 58C65 63 60 62 60 67C60 72 58 76 52 76H38C32 76 28 74 24 73C16 72 10 74 3 74Z" />
                        </svg>
                    </button>
                    <button aria-label="Komentáře">
                        <svg width="76" height="68" viewBox="0 0 76 68" fill="none" stroke="#303030" strokeWidth="4.500">
                            <path d="M26 2.500H50A23 24.500 0 0 1 50 51.500H39L19 64V50.500A24.500 24.500 0 0 1 26 2.500Z" />
                        </svg>
                    </button>
                </div>
                <div className="flex h-36 items-center bg-linear-to-b from-[#f7f7f7] to-white to-35% pl-[45px]">
                    <button className="text-[43px] font-bold leading-[48px] text-[#53b0e5]">Přidat komentář</button>
                </div>
                <div className="h-12 bg-[#f7f7f7]" />

                <section className="mx-[39px] grid grid-cols-3">
                    {STATS.map((stat, i) => (
                        <StatCell key={stat.label} stat={stat} first={i % 3 === 0} last={i % 3 === 2} />
                    ))}
                </section>
            </main>
            <div className="fixed bottom-6 left-1/2 h-[15px] w-[402px] -translate-x-1/2 rounded-full bg-black" />
        </div>
    );
}
